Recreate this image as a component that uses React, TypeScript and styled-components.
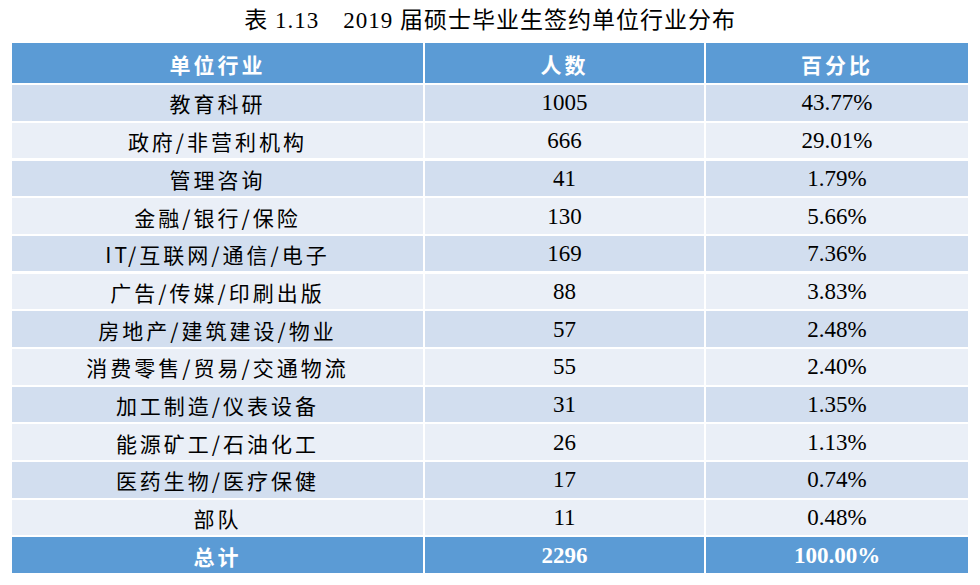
import React from 'react';
import styled, { createGlobalStyle } from 'styled-components';

const GlobalStyle = createGlobalStyle`
  html, body {
    margin: 0;
    padding: 0;
    background: #ffffff;
  }
`;

interface Row {
  industry: string;
  count: string;
  percent: string;
}

const rows: Row[] = [
  { industry: '教育科研', count: '1005', percent: '43.77%' },
  { industry: '政府/非营利机构', count: '666', percent: '29.01%' },
  { industry: '管理咨询', count: '41', percent: '1.79%' },
  { industry: '金融/银行/保险', count: '130', percent: '5.66%' },
  { industry: 'IT/互联网/通信/电子', count: '169', percent: '7.36%' },
  { industry: '广告/传媒/印刷出版', count: '88', percent: '3.83%' },
  { industry: '房地产/建筑建设/物业', count: '57', percent: '2.48%' },
  { industry: '消费零售/贸易/交通物流', count: '55', percent: '2.40%' },
  { industry: '加工制造/仪表设备', count: '31', percent: '1.35%' },
  { industry: '能源矿工/石油化工', count: '26', percent: '1.13%' },
  { industry: '医药生物/医疗保健', count: '17', percent: '0.74%' },
  { industry: '部队', count: '11', percent: '0.48%' },
];

const Page = styled.div`
  width: 980px;
  height: 585px;
  box-sizing: border-box;
  padding: 6px 12px 0 12px;
  display: flex;
  flex-direction: column;
  align-items: stretch;
`;

const Caption = styled.div`
  height: 37px;
  text-align: center;
  font-family: 'Liberation Serif', 'Noto Sans CJK SC', serif;
  font-size: 23px;
  line-height: 30px;
  color: #000;
  letter-spacing: 1px;
  white-space: pre;
`;

const Grid = styled.div`
  display: grid;
  grid-template-columns: 411px 279px 262px;
  grid-template-rows: 40px repeat(13, 35.5px);
  column-gap: 2px;
  row-gap: 2.2px;
  width: 956px;
`;

type Tone = 'head' | 'dark' | 'light';

const bg: Record<Tone, string> = {
  head: '#5b9bd5',
  dark: '#d2deef',
  light: '#eaeff7',
};

const Cell = styled.div<{ $tone: Tone; $cjk?: boolean }>`
  display: flex;
  align-items: center;
  justify-content: center;
  background: ${(p) => bg[p.$tone]};
  color: ${(p) => (p.$tone === 'head' ? '#ffffff' : '#000000')};
  font-weight: ${(p) => (p.$tone === 'head' ? 700 : 400)};
  font-family: ${(p) =>
    p.$cjk
      ? "'Noto Sans CJK SC', 'Liberation Sans', sans-serif"
      : "'Liberation Serif', 'Noto Sans CJK SC', serif"};
  font-size: ${(p) => (p.$cjk ? '21px' : '23px')};
  letter-spacing: ${(p) => (p.$cjk ? '3px' : '0')};
  padding-top: 1px;
`;

export default function App(): React.ReactElement {
  return (
    <>
      <GlobalStyle />
      <Page>
        <Caption>{'表 1.13　2019 届硕士毕业生签约单位行业分布'}</Caption>
        <Grid>
          <Cell $tone='head' $cjk>单位行业</Cell>
          <Cell $tone='head' $cjk>人数</Cell>
          <Cell $tone='head' $cjk>百分比</Cell>
          {rows.map((r, i) => {
            const tone: Tone = i % 2 === 0 ? 'dark' : 'light';
            return (
              <React.Fragment key={r.industry}>
                <Cell $tone={tone} $cjk>{r.industry}</Cell>
                <Cell $tone={tone}>{r.count}</Cell>
                <Cell $tone={tone}>{r.percent}</Cell>
              </React.Fragment>
            );
          })}
          <Cell $tone='head' $cjk>总计</Cell>
          <Cell $tone='head'>2296</Cell>
          <Cell $tone='head'>100.00%</Cell>
        </Grid>
      </Page>
    </>
  );
}
